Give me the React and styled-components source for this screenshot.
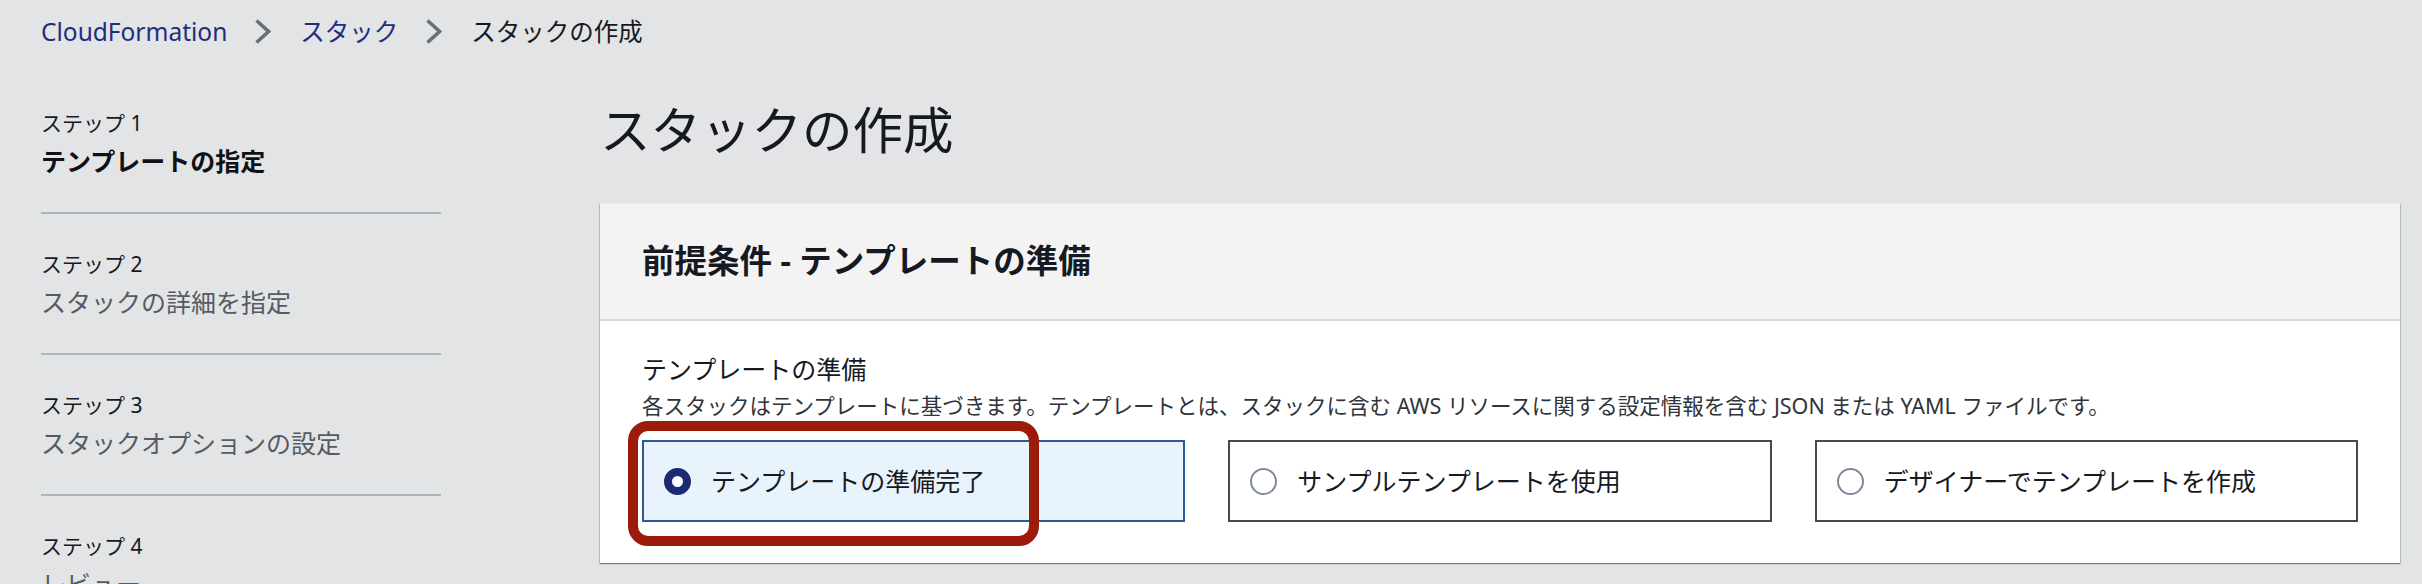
import React from 'react'
import styled, { createGlobalStyle } from 'styled-components'


const GlobalStyle = createGlobalStyle`
  html, body {
    margin: 0;
    overflow: hidden;
  }
  body {
    background-color: #e3e4e6;
    font-family: "Noto Sans", "Noto Sans CJK JP", sans-serif;
    color: #16191f;
  }
`

const Breadcrumbs = styled.nav`
  display: flex;
  align-items: center;
  height: 35px;
  padding: 14px 0 0 41px;
  font-size: 24.5px;
  line-height: 35px;
`

const Crumb = styled.span`
  color: ${(props) => (props.current ? '#16191f' : '#1d2f7e')};
`

const Chevron = styled.svg`
  width: 17px;
  height: 27px;
  margin: 0 29px 0 27px;
`

const Layout = styled.div`
  display: flex;
  gap: 159px;
  padding: 0 22px 0 41px;
`

const Sidebar = styled.ol`
  width: 400px;
  flex-shrink: 0;
  margin: 0;
  padding: 23px 0 0;
  list-style: none;
`

const Step = styled.li`
  padding: 35px 0 33px;
  border-bottom: 2px solid #aab7b8;

  &:first-child {
    padding-top: 36px;
  }
`

const StepLabel = styled.div`
  font-size: 21px;
  line-height: 30px;
  color: #16191f;
`

const StepTitle = styled.div`
  margin-top: 6px;
  font-size: 25px;
  line-height: 35px;
  font-weight: ${(props) => (props.active ? 700 : 400)};
  color: ${(props) => (props.active ? '#0f1114' : '#545b64')};
`

const Content = styled.main`
  flex: 1;
  min-width: 0;
`

const PageTitle = styled.h1`
  margin: 51px 0 43px;
  font-size: 50.5px;
  line-height: 60px;
  font-weight: 400;
  color: #16191f;
`

const Card = styled.section`
  background-color: #fff;
  border-top: 1px solid #eaeded;
  box-shadow: 0 1px 1px 0 rgba(0, 28, 36, 0.3),
    1px 1px 1px 0 rgba(0, 28, 36, 0.15),
    -1px 1px 1px 0 rgba(0, 28, 36, 0.15);
`

const CardHeader = styled.header`
  padding: 37px 42px 38px;
  background-color: #f3f3f3;
  border-bottom: 2px solid #d5dbdb;
`

const CardTitle = styled.h2`
  margin: 0;
  font-size: 32.5px;
  line-height: 40px;
  font-weight: 700;
`

const CardBody = styled.div`
  padding: 31px 42px 41px;
`

const FieldLabel = styled.div`
  font-size: 25px;
  line-height: 35px;
  color: #16191f;
`

const FieldDescription = styled.div`
  margin-top: 4px;
  font-size: 21.5px;
  line-height: 30px;
  color: #2f343a;
`

const Tiles = styled.div`
  display: grid;
  grid-template-columns: repeat(3, 1fr);
  gap: 43px;
  margin-top: 19px;
`

const Tile = styled.label`
  position: relative;
  display: flex;
  align-items: center;
  gap: 20px;
  height: 82px;
  box-sizing: border-box;
  padding: 0 20px;
  border: 2px solid ${(props) => (props.selected ? '#2b5b94' : '#454b53')};
  background-color: ${(props) => (props.selected ? '#e9f3fc' : '#fff')};
  font-size: 25px;
  line-height: 35px;
  color: #16191f;
`

const Radio = styled.span`
  flex-shrink: 0;
  width: 27px;
  height: 27px;
  box-sizing: border-box;
  border-radius: 50%;
  background-color: #fff;
  border: ${(props) => (props.checked ? '8px solid #1b2a73' : '2px solid #7d8998')};
`

const Highlight = styled.span`
  position: absolute;
  left: -16px;
  top: -21px;
  width: 411px;
  height: 125px;
  box-sizing: border-box;
  border: 10px solid #9c1b0b;
  border-radius: 20px;
  pointer-events: none;
`


const steps = [
  { label: 'ステップ 1', title: 'テンプレートの指定', active: true },
  { label: 'ステップ 2', title: 'スタックの詳細を指定' },
  { label: 'ステップ 3', title: 'スタックオプションの設定' },
  { label: 'ステップ 4', title: 'レビュー' },
]

const options = [
  { label: 'テンプレートの準備完了', selected: true },
  { label: 'サンプルテンプレートを使用' },
  { label: 'デザイナーでテンプレートを作成' },
]

const Separator = () => (
  <Chevron viewBox='0 0 17 27'>
    <polyline points='2.5,2.5 14.5,13.5 2.5,24.5' fill='none' stroke='#687078' strokeWidth='3.6' />
  </Chevron>
)

const App = () => {
  return (
    <>
      <GlobalStyle />
      <Breadcrumbs>
        <Crumb>CloudFormation</Crumb>
        <Separator />
        <Crumb>スタック</Crumb>
        <Separator />
        <Crumb current>スタックの作成</Crumb>
      </Breadcrumbs>
      <Layout>
        <Sidebar>
          {steps.map((step) => (
            <Step key={step.label}>
              <StepLabel>{step.label}</StepLabel>
              <StepTitle active={step.active}>{step.title}</StepTitle>
            </Step>
          ))}
        </Sidebar>
        <Content>
          <PageTitle>スタックの作成</PageTitle>
          <Card>
            <CardHeader>
              <CardTitle>前提条件 - テンプレートの準備</CardTitle>
            </CardHeader>
            <CardBody>
              <FieldLabel>テンプレートの準備</FieldLabel>
              <FieldDescription>
                各スタックはテンプレートに基づきます。テンプレートとは、スタックに含む AWS リソースに関する設定情報を含む JSON または YAML ファイルです。
              </FieldDescription>
              <Tiles>
                {options.map((option) => (
                  <Tile key={option.label} selected={option.selected}>
                    <Radio checked={option.selected} />
                    {option.label}
                    {option.selected && <Highlight />}
                  </Tile>
                ))}
              </Tiles>
            </CardBody>
          </Card>
        </Content>
      </Layout>
    </>
  )
}

export default App
